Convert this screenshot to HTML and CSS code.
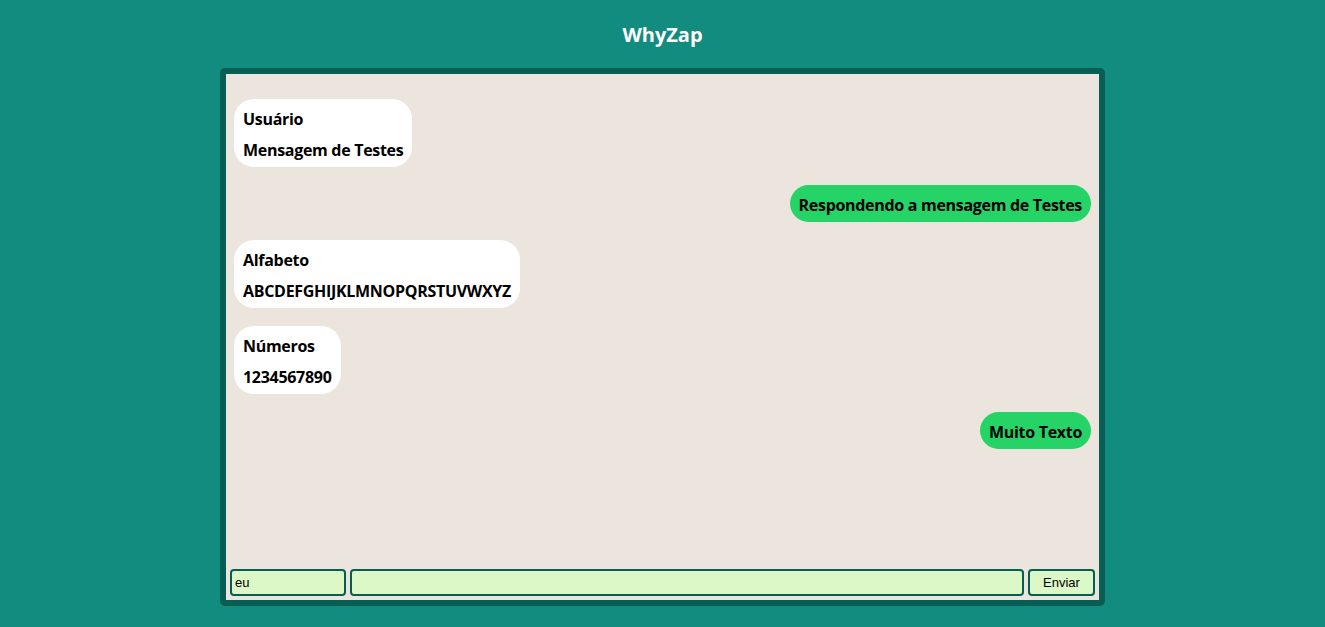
FILE: index.html
```html
<!DOCTYPE html>
<html lang="pt">
<head>
<meta charset="utf-8">
<title>WhyZap</title>
<link rel="stylesheet" href="styles.css">
</head>
<body>
<h1 class="title">WhyZap</h1>
<div class="chat">
  <div class="messages">
    <div class="msg other">
      <div class="name">Usuário</div>
      <div class="text">Mensagem de Testes</div>
    </div>
    <div class="msg mine">
      <div class="text">Respondendo a mensagem de Testes</div>
    </div>
    <div class="msg other">
      <div class="name">Alfabeto</div>
      <div class="text">ABCDEFGHIJKLMNOPQRSTUVWXYZ</div>
    </div>
    <div class="msg other">
      <div class="name">Números</div>
      <div class="text">1234567890</div>
    </div>
    <div class="msg mine">
      <div class="text">Muito Texto</div>
    </div>
  </div>
  <form class="composer">
    <input class="user" type="text" value="eu">
    <input class="input" type="text">
    <button class="send" type="button">Enviar</button>
  </form>
</div>
</body>
</html>
```
FILE: styles.css
```css
* { box-sizing: border-box; }
html, body { margin: 0; padding: 0; }
body {
  background: #128C7E;
  font-family: "Segoe UI", "Open Sans", "Noto Sans", sans-serif;
  height: 627px;
  overflow: hidden;
}
.title {
  margin: 0;
  padding-top: 21px;
  height: 68px;
  text-align: center;
  color: #fff;
  font-size: 20px;
  font-weight: 700;
  line-height: 27px;
}
.chat {
  width: 885px;
  height: 538px;
  margin: 0 auto;
  border: 6px solid #075E54;
  border-radius: 5px;
  background: #ECE5DD;
  display: flex;
  flex-direction: column;
}
.messages {
  flex: 1;
  display: flex;
  flex-direction: column;
  align-items: flex-start;
  padding: 25px 8px 0 8px;
  gap: 18px;
}
.msg {
  border-radius: 20px;
  padding: 10px 9px 6px 9px;
  font-size: 16px;
  font-weight: 700;
  letter-spacing: -0.3px;
  line-height: 21px;
  color: #000;
}
.msg.other { background: #fff; }
.msg.mine { background: #25D366; align-self: flex-end; }
.name { margin-bottom: 10px; }
.composer {
  display: flex;
  gap: 4px;
  padding: 0 4px 4px 4px;
  margin: 0;
}
.composer input, .composer button {
  height: 27px;
  border: 2px solid #075E54;
  border-radius: 4px;
  background: #DCF8C6;
  font-family: "Liberation Sans", Arial, sans-serif;
  font-size: 13px;
  color: #000;
  margin: 0;
}
.composer input { padding: 1px 3px; }
.user { width: 116px; }
.input { flex: 1; }
.send { width: 67px; padding: 0; }
```
